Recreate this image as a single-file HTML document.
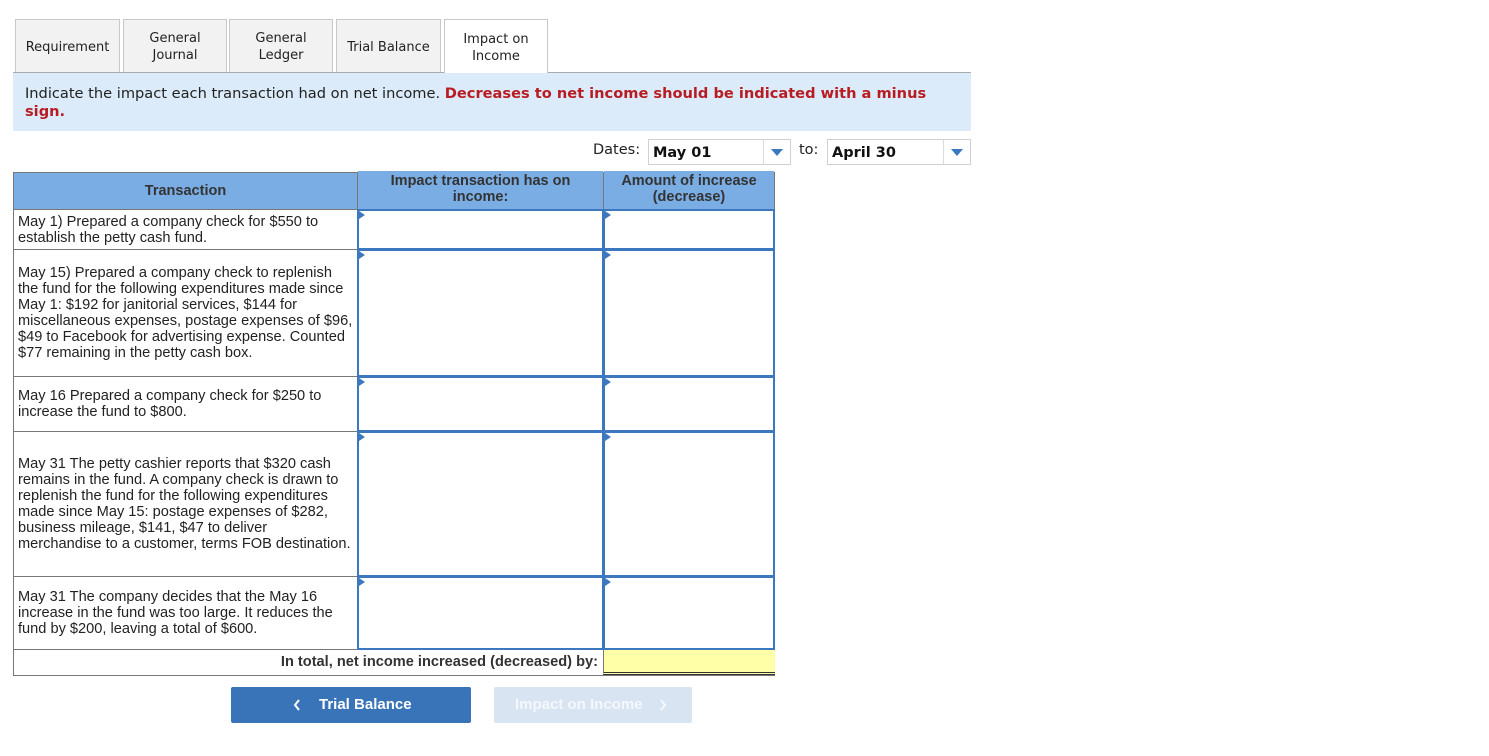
<!DOCTYPE html><html><head><meta charset="utf-8"><style>
body{margin:0;width:1489px;height:756px;background:#fff;position:relative;font-family:"DejaVu Sans",Verdana,sans-serif;overflow:hidden}
.a{position:absolute;box-sizing:border-box}
.tab{position:absolute;top:19px;height:53px;background:#f2f2f2;border:1px solid #c8c8c8;border-bottom:none;font-size:13px;color:#222;display:flex;align-items:center;justify-content:center;text-align:center;line-height:17px;box-sizing:border-box;padding-top:2px}
.t{font-family:"Liberation Sans",Arial,sans-serif;font-size:14.6px;line-height:16px;color:#222}
.cell{position:absolute;border:2px solid #3b78c0;background:#fff;box-sizing:border-box}
.cell:before{content:"";position:absolute;left:0;top:0;border-left:6px solid #3b78c0;border-top:4px solid transparent;border-bottom:4px solid transparent}
.hd{font-family:"Liberation Sans",Arial,sans-serif;font-weight:bold;font-size:14.5px;line-height:16px;color:#333;text-align:center;display:flex;align-items:center;justify-content:center}
.arrow{position:absolute;width:0;height:0;border-left:6px solid transparent;border-right:6px solid transparent;border-top:7px solid #3a78c0}
</style></head><body>
<div class="tab" style="left:15px;width:105px">Requirement</div>
<div class="tab" style="left:123px;width:104px">General<br>Journal</div>
<div class="tab" style="left:229px;width:104px">General<br>Ledger</div>
<div class="tab" style="left:336px;width:105px">Trial Balance</div>
<div class="a" style="left:13px;top:72px;width:958px;height:1px;background:#aaa"></div>
<div class="tab" style="left:444px;width:104px;height:54px;background:#fff;z-index:2">Impact on<br>Income</div>
<div class="a" style="left:13px;top:73px;width:958px;height:58px;background:#dbebf9;padding:12px 12px;font-size:14.6px;line-height:18px;color:#222">Indicate the impact each transaction had on net income. <b style="color:#b81c22">Decreases to net income should be indicated with a minus sign.</b></div>

<div class="a" style="left:593px;top:142px;font-size:14.5px;color:#222">Dates:</div>
<div class="a" style="left:648px;top:139px;width:143px;height:26px;border:1px solid #d0d0d0;font-size:14.5px;font-weight:bold;padding:5px 4px;color:#111">May 01</div>
<div class="a" style="left:763px;top:140px;width:1px;height:24px;background:#ddd"></div>
<div class="arrow" style="left:771px;top:149px"></div>
<div class="a" style="left:799px;top:142px;font-size:14.5px;color:#222">to:</div>
<div class="a" style="left:827px;top:139px;width:144px;height:26px;border:1px solid #d0d0d0;font-size:14.5px;font-weight:bold;padding:5px 4px;color:#111">April 30</div>
<div class="a" style="left:943px;top:140px;width:1px;height:24px;background:#ddd"></div>
<div class="arrow" style="left:951px;top:149px"></div>

<div class="a" style="left:13px;top:172px;width:762px;height:504px;border:1px solid #777"></div>
<div class="a hd" style="left:14px;top:173px;width:343px;height:36px;background:#7aade3">Transaction</div>
<div class="a hd" style="left:358px;top:171px;width:245px;height:36px;background:#7aade3">Impact transaction has on<br>income:</div>
<div class="a hd" style="left:604px;top:171px;width:170px;height:36px;background:#7aade3">Amount of increase<br>(decrease)</div>
<div class="a" style="left:358px;top:207px;width:416px;height:2px;background:#7aade3"></div>
<div class="a" style="left:357px;top:173px;width:1px;height:36px;background:#777"></div>
<div class="a" style="left:603px;top:173px;width:1px;height:36px;background:#777"></div>

<div class="a" style="left:14px;top:209px;width:760px;height:1px;background:#777"></div>
<div class="a" style="left:14px;top:249px;width:344px;height:1px;background:#777"></div>
<div class="a" style="left:14px;top:376px;width:344px;height:1px;background:#777"></div>
<div class="a" style="left:14px;top:431px;width:344px;height:1px;background:#777"></div>
<div class="a" style="left:14px;top:576px;width:344px;height:1px;background:#777"></div>
<div class="a" style="left:14px;top:649px;width:760px;height:1px;background:#777"></div>

<div class="a t" style="left:18px;top:214px">May 1) Prepared a company check for $550 to<br>establish the petty cash fund.</div>
<div class="a t" style="left:18px;top:265px">May 15) Prepared a company check to replenish<br>the fund for the following expenditures made since<br>May 1: $192 for janitorial services, $144 for<br>miscellaneous expenses, postage expenses of $96,<br>$49 to Facebook for advertising expense. Counted<br>$77 remaining in the petty cash box.</div>
<div class="a t" style="left:18px;top:388px">May 16 Prepared a company check for $250 to<br>increase the fund to $800.</div>
<div class="a t" style="left:18px;top:456px">May 31 The petty cashier reports that $320 cash<br>remains in the fund. A company check is drawn to<br>replenish the fund for the following expenditures<br>made since May 15: postage expenses of $282,<br>business mileage, $141, $47 to deliver<br>merchandise to a customer, terms FOB destination.</div>
<div class="a t" style="left:18px;top:589px">May 31 The company decides that the May 16<br>increase in the fund was too large. It reduces the<br>fund by $200, leaving a total of $600.</div>

<div class="cell" style="left:357px;top:209px;width:247px;height:41px"></div>
<div class="cell" style="left:603px;top:209px;width:172px;height:41px"></div>
<div class="cell" style="left:357px;top:249px;width:247px;height:128px"></div>
<div class="cell" style="left:603px;top:249px;width:172px;height:128px"></div>
<div class="cell" style="left:357px;top:376px;width:247px;height:56px"></div>
<div class="cell" style="left:603px;top:376px;width:172px;height:56px"></div>
<div class="cell" style="left:357px;top:431px;width:247px;height:146px"></div>
<div class="cell" style="left:603px;top:431px;width:172px;height:146px"></div>
<div class="cell" style="left:357px;top:576px;width:247px;height:74px"></div>
<div class="cell" style="left:603px;top:576px;width:172px;height:74px"></div>

<div class="a" style="left:180px;top:654px;width:418px;text-align:right;font-family:'Liberation Sans',Arial,sans-serif;font-weight:bold;font-size:14.6px;color:#333">In total, net income increased (decreased) by:</div>
<div class="a" style="left:603px;top:650px;width:172px;height:25px;background:#ffffa8;border-left:1px solid #777;border-bottom:3px double #333"></div>

<div class="a" style="left:231px;top:687px;width:240px;height:36px;background:#3a74b8;border-radius:2px;color:#fff;font-family:'Liberation Sans',Arial,sans-serif;font-weight:bold;font-size:15px;line-height:36px">
<svg class="a" style="left:62px;top:12px" width="8" height="12" viewBox="0 0 8 12"><path d="M6 1 L2 6 L6 11" stroke="#fff" stroke-width="2" fill="none"/></svg>
<span style="position:absolute;left:88px">Trial Balance</span></div>
<div class="a" style="left:494px;top:687px;width:198px;height:36px;background:#d8e4f2;border-radius:2px;color:#f4f8fc;font-family:'Liberation Sans',Arial,sans-serif;font-weight:bold;font-size:15px;line-height:36px"><span style="position:absolute;left:21px">Impact on Income</span>
<svg class="a" style="left:165px;top:12px" width="8" height="12" viewBox="0 0 8 12"><path d="M2 1 L6 6 L2 11" stroke="#f4f8fc" stroke-width="2" fill="none"/></svg></div>
</body></html>
